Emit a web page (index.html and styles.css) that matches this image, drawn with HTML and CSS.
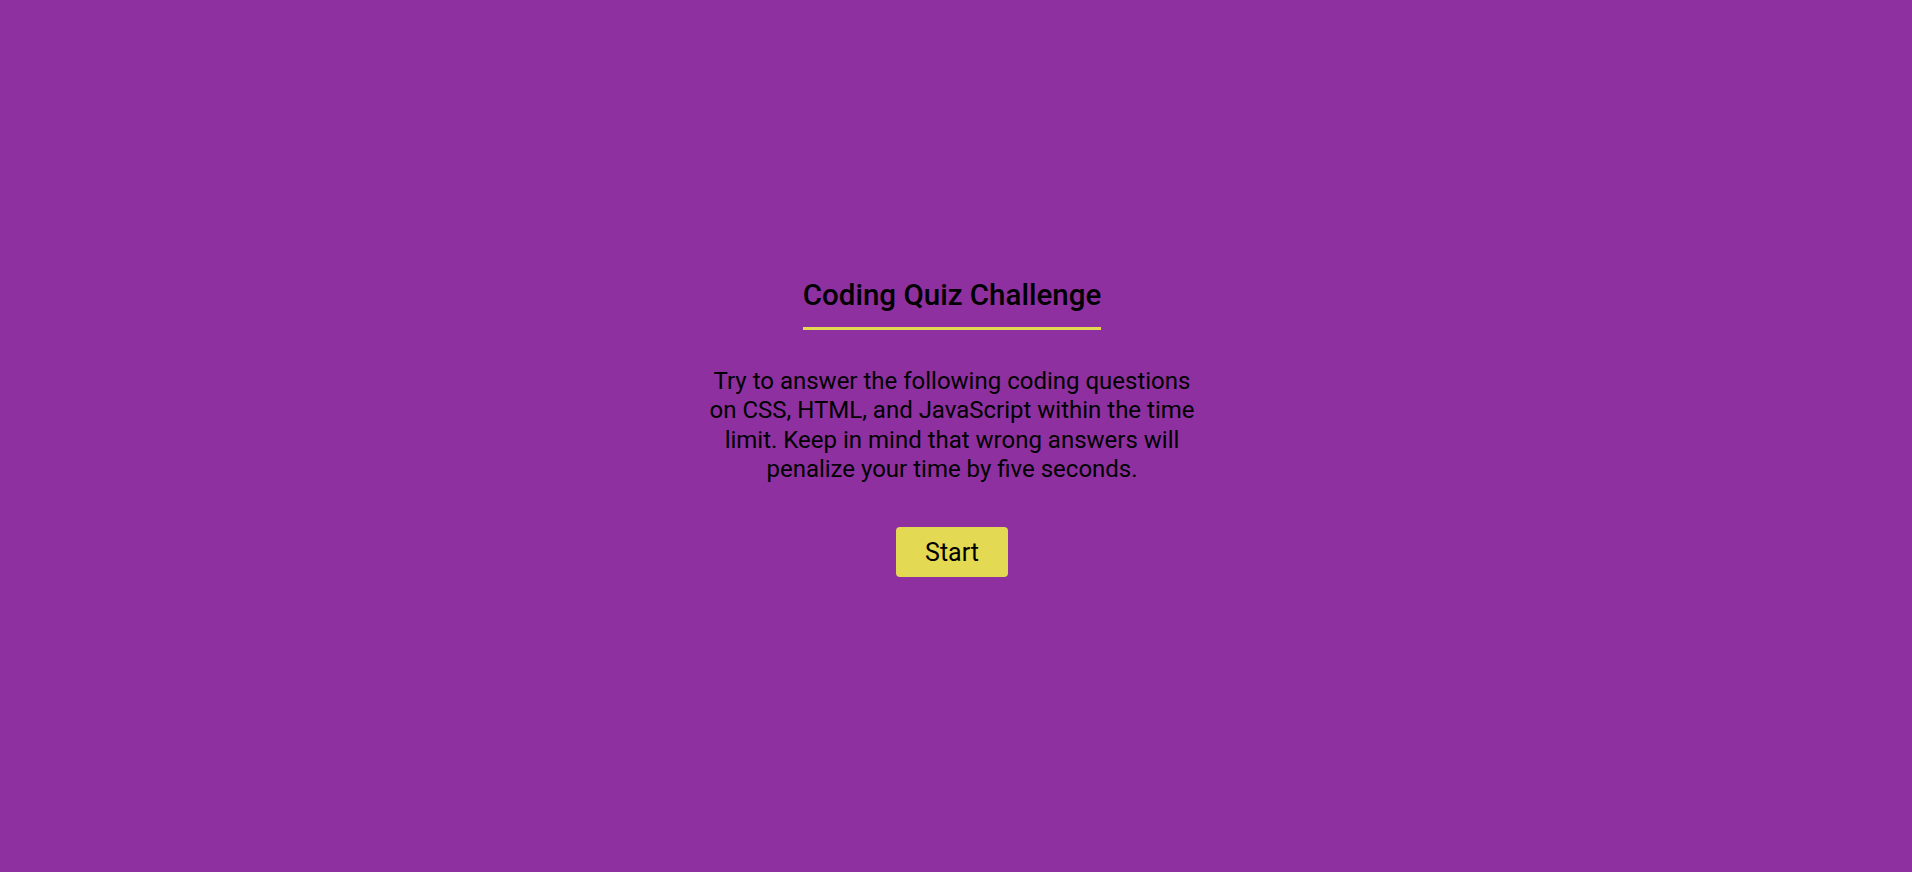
FILE: index.html
```html
<!DOCTYPE html>
<html lang="en">
<head>
<meta charset="utf-8">
<title>Coding Quiz Challenge</title>
<link rel="stylesheet" href="styles.css">
</head>
<body>
<main class="intro">
  <h1 class="intro-title">Coding Quiz Challenge</h1>
  <p class="intro-text">Try to answer the following coding questions on CSS, HTML, and JavaScript within the time limit. Keep in mind that wrong answers will penalize your time by five seconds.</p>
  <button class="start-btn" type="button">Start</button>
</main>
</body>
</html>
```
FILE: styles.css
```css
html, body {
  margin: 0;
  padding: 0;
  height: 100%;
}
body {
  background: #8e30a0;
  font-family: Roboto, "Liberation Sans", sans-serif;
  color: #000;
}
.intro {
  display: flex;
  flex-direction: column;
  align-items: center;
  padding-top: 278px;
  margin-left: -8px;
}
.intro-title {
  margin: 0;
  font-size: 29.5px;
  font-weight: 500;
  line-height: 35px;
  padding-bottom: 14px;
  border-bottom: 3px solid #e3d952;
}
.intro-text {
  margin: 37px 0 0;
  width: 496px;
  text-align: center;
  font-size: 24px;
  line-height: 29.3px;
}
.start-btn {
  margin-top: 43px;
  width: 112px;
  height: 50px;
  border: none;
  border-radius: 4px;
  background: #e3d952;
  color: #000;
  font-family: Roboto, "Liberation Sans", sans-serif;
  font-size: 25px;
  padding: 0;
}
```
